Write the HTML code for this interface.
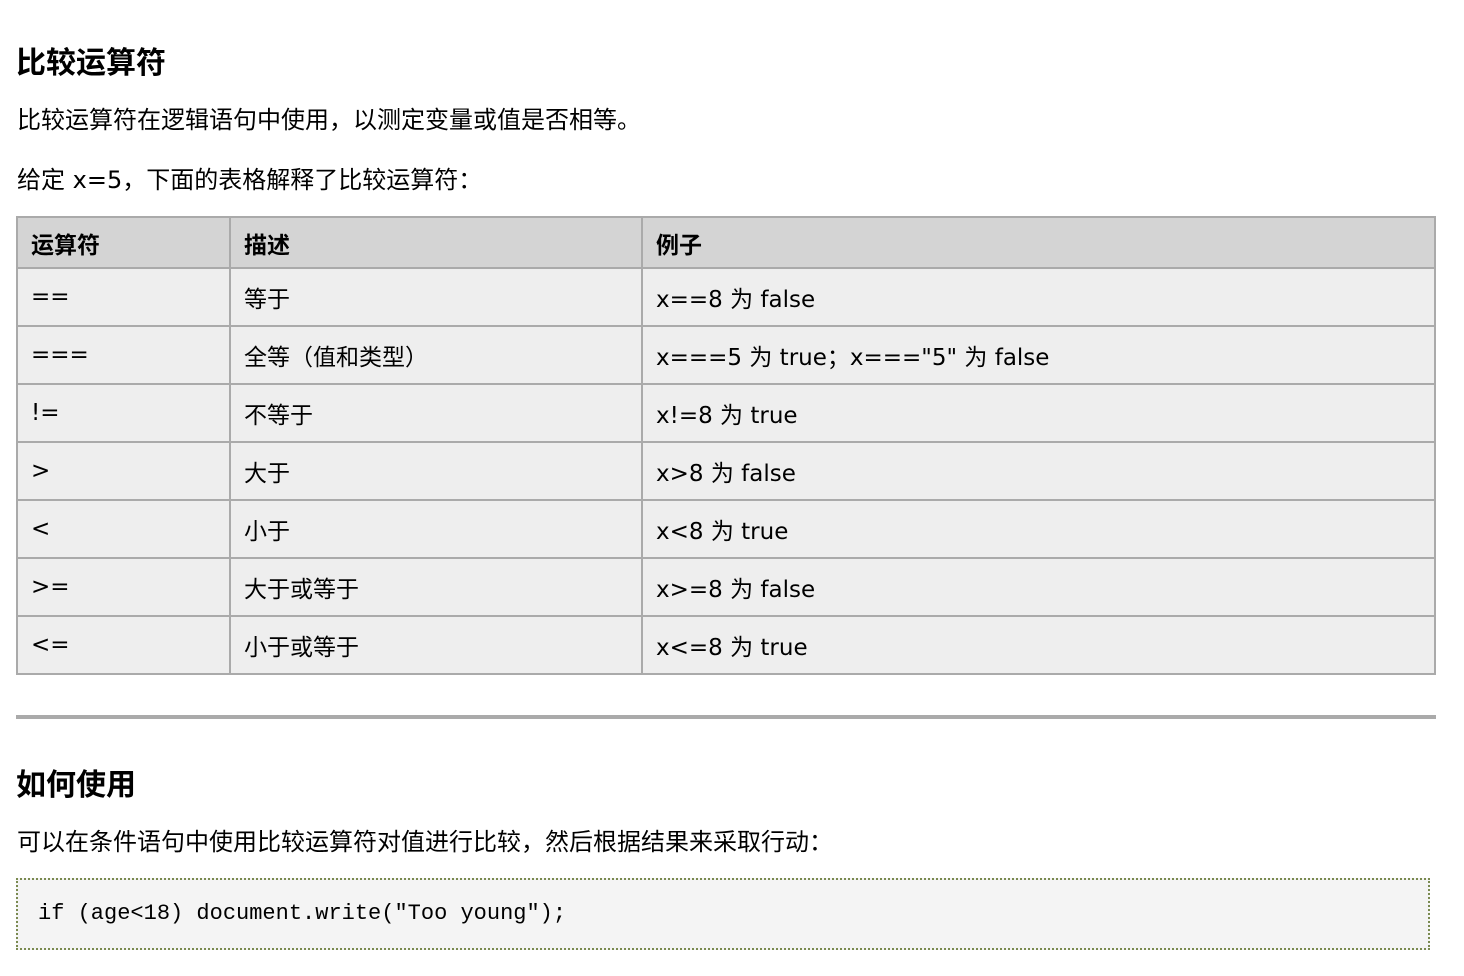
<!DOCTYPE html>
<html><head><meta charset="utf-8"><style>
body{margin:0;background:#fff;font-family:"DejaVu Sans","Noto Sans CJK SC",sans-serif;color:#000;width:1464px;height:976px;overflow:hidden;position:relative}
.a{position:absolute;white-space:nowrap}
h2{margin:0;font-size:30px;font-weight:bold;font-family:"Noto Sans CJK SC",sans-serif}
p{margin:0;font-size:24px}
table{position:absolute;left:16px;top:216px;width:1420px;border-collapse:collapse;font-size:23px}
td,th{border:2px solid #aaa;padding:0 0 0 13px;text-align:left;vertical-align:middle}
th{background:#d4d4d4;height:49px;font-weight:bold}
td{background:#eee;height:56px}
.hr{position:absolute;left:16px;top:715px;width:1420px;height:4px;background:#aaa}
.code{position:absolute;left:16px;top:878px;width:1390px;height:68px;border:2px dotted #7a8a50;background:#f4f4f4;font-family:"Liberation Mono",monospace;font-size:22px;line-height:68px;padding-left:20px;box-sizing:content-box}
</style></head><body>
<h2 class="a" style="left:16px;top:38px">比较运算符</h2>
<p class="a" style="left:17px;top:100px">比较运算符在逻辑语句中使用，以测定变量或值是否相等。</p>
<p class="a" style="left:17px;top:160px">给定 x=5，下面的表格解释了比较运算符：</p>
<table>
<tr><th style="width:198px">运算符</th><th style="width:397px">描述</th><th>例子</th></tr>
<tr><td>==</td><td>等于</td><td>x==8 为 false</td></tr>
<tr><td>===</td><td>全等（值和类型）</td><td>x===5 为 true；x==="5" 为 false</td></tr>
<tr><td>!=</td><td>不等于</td><td>x!=8 为 true</td></tr>
<tr><td>&gt;</td><td>大于</td><td>x&gt;8 为 false</td></tr>
<tr><td>&lt;</td><td>小于</td><td>x&lt;8 为 true</td></tr>
<tr><td>&gt;=</td><td>大于或等于</td><td>x&gt;=8 为 false</td></tr>
<tr><td>&lt;=</td><td>小于或等于</td><td>x&lt;=8 为 true</td></tr>
</table>
<div class="hr"></div>
<h2 class="a" style="left:16px;top:760px">如何使用</h2>
<p class="a" style="left:17px;top:822px">可以在条件语句中使用比较运算符对值进行比较，然后根据结果来采取行动：</p>
<div class="code">if (age&lt;18) document.write("Too young");</div>
</body></html>
